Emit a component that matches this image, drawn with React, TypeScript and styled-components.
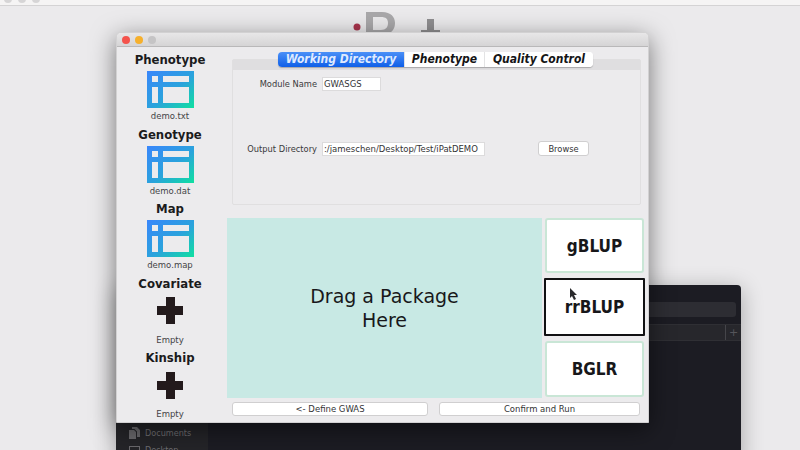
import React from "react";
import styled, { createGlobalStyle } from "styled-components";

const GlobalStyle = createGlobalStyle`
  html, body {
    margin: 0;
    padding: 0;
    width: 800px;
    height: 450px;
    overflow: hidden;
    background: #ebeaec;
    font-family: "DejaVu Sans", "Liberation Sans", sans-serif;
  }
`;

const Desktop = styled("div")`
  position: relative;
  width: 800px;
  height: 450px;
  overflow: hidden;
  background: #ebeaec;
`;

const BackTopBar = styled("div")`
  display: flex;
  gap: 6px;
  height: 5px;
  padding-left: 4px;
  background: #f5f4f4;
  border-bottom: 1px solid #d4d3d4;
  overflow: hidden;
`;

const FadedDot = styled("span")`
  width: 8px;
  height: 8px;
  margin-top: -5px;
  border-radius: 50%;
  background: #d6d5d6;
`;

const Logo = styled("svg")`
  position: absolute;
  left: 345px;
  top: 8px;
`;

const DarkWindow = styled("div")`
  position: absolute;
  left: 116px;
  top: 285px;
  width: 625px;
  height: 180px;
  display: flex;
  background: #1c1c23;
  border-radius: 4px 4px 0 0;
  box-shadow: 0 4px 22px rgba(0, 0, 0, 0.3);
`;

const DarkSidebar = styled("div")`
  width: 92px;
  padding: 142px 0 0 13px;
  box-sizing: border-box;
  display: flex;
  flex-direction: column;
  gap: 5px;
  background: #242428;
`;

const DarkItem = styled("div")`
  display: flex;
  align-items: center;
  gap: 5px;
  height: 12px;
  font-size: 9px;
  font-stretch: condensed;
  color: #6f6e72;
`;

const DarkMain = styled("div")`
  flex: 1;
  display: flex;
  flex-direction: column;
`;

const DarkToolbar = styled("div")`
  height: 22px;
  margin: 17px 5px 0 0;
`;

const DarkSearch = styled("div")`
  height: 15px;
  border-radius: 3px;
  background: #2d2d33;
`;

const DarkTabs = styled("div")`
  height: 15px;
  display: flex;
  justify-content: flex-end;
  border-top: 1px solid #2f2f34;
  border-bottom: 1px solid #2f2f34;
  background: #27272c;
`;

const DarkPlus = styled("div")`
  width: 15px;
  line-height: 15px;
  text-align: center;
  font-size: 11px;
  color: #55555a;
  border-left: 1px solid #45454a;
`;

const MainWindow = styled("div")`
  position: absolute;
  left: 116px;
  top: 32px;
  width: 533px;
  height: 391px;
  display: flex;
  flex-direction: column;
  box-sizing: border-box;
  background: #ecebed;
  border: 1px solid #d2d1d2;
  border-radius: 5px 5px 0 0;
  box-shadow: 0 6px 24px rgba(0, 0, 0, 0.5);
`;

const TitleBar = styled("div")`
  flex: none;
  height: 13px;
  display: flex;
  align-items: center;
  gap: 5px;
  padding-left: 5px;
  background: linear-gradient(#e8e7e8, #d5d4d5);
  border-bottom: 1px solid #b9b8b9;
  border-radius: 4px 4px 0 0;
`;

const Light = styled("span")<{ $color: string }>`
  width: 8px;
  height: 8px;
  border-radius: 50%;
  background: ${(p) => p.$color};
`;

const WindowBody = styled("div")`
  flex: 1;
  display: flex;
  min-height: 0;
`;

const Sidebar = styled("div")`
  flex: none;
  width: 106px;
  display: flex;
  flex-direction: column;
  padding-top: 5px;
  box-sizing: border-box;
`;

const SourceItem = styled("div")`
  flex: none;
  height: 74.5px;
  display: flex;
  flex-direction: column;
  align-items: center;
`;

const SourceTitle = styled("div")`
  height: 15px;
  line-height: 15px;
  font-size: 13px;
  font-weight: 700;
  font-stretch: condensed;
  color: #1b1b1c;
`;

const SourceIcon = styled("div")`
  height: 38px;
  margin-top: 4px;
  display: flex;
  align-items: flex-start;
`;

const PlusSvg = styled("svg")`
  margin-top: 2.5px;
`;

const SourceLabel = styled("div")`
  margin-top: 2px;
  line-height: 11px;
  font-size: 8.5px;
  color: #444446;
`;

const Content = styled("div")`
  position: relative;
  flex: 1;
  min-width: 0;
  display: flex;
  flex-direction: column;
  padding-top: 12px;
`;

const TabBar = styled("div")`
  position: absolute;
  left: 55px;
  top: 5px;
  z-index: 1;
  display: flex;
  height: 15px;
  border-radius: 4px;
  background: #fff;
  box-shadow: 0 1px 1px rgba(0, 0, 0, 0.25);
  overflow: hidden;
`;

const Tab = styled("div")<{ $width: number; $active?: boolean }>`
  width: ${(p) => p.$width}px;
  line-height: 15px;
  text-align: center;
  font-size: 12px;
  font-weight: 700;
  font-style: italic;
  font-stretch: condensed;
  color: ${(p) => (p.$active ? "#dfeaff" : "#151516")};
  background: ${(p) => (p.$active ? "linear-gradient(#4b90f7, #0f5fe8)" : "#fff")};
  border-right: 1px solid #e3e3e4;
  box-sizing: border-box;
  &:last-child {
    border-right: 0;
  }
`;

const Panel = styled("div")`
  flex: none;
  height: 146px;
  margin: 0 7px 0 9px;
  box-sizing: border-box;
  border: 1px solid #e0dfe0;
  border-radius: 2px;
`;

const PanelStrip = styled("div")`
  height: 10px;
  background: #dfdee0;
`;

const FormRow = styled("div")<{ $top: number }>`
  display: flex;
  align-items: center;
  height: 15px;
  margin-top: ${(p) => p.$top}px;
`;

const FieldLabel = styled("div")`
  width: 84px;
  margin-right: 5px;
  text-align: right;
  white-space: nowrap;
  font-size: 8.3px;
  color: #3a3a3c;
`;

const Field = styled("div")<{ $width: number }>`
  width: ${(p) => p.$width}px;
  height: 14px;
  box-sizing: border-box;
  padding-left: 1px;
  line-height: 13px;
  font-size: 8.5px;
  white-space: nowrap;
  overflow: hidden;
  color: #333335;
  background: #fff;
  border: 1px solid #dcdbdc;
`;

const BrowseButton = styled("div")`
  width: 51px;
  height: 15px;
  margin-left: 53px;
  line-height: 14px;
  text-align: center;
  font-size: 8.3px;
  color: #333335;
  background: #fff;
  border: 1px solid #d0cfd0;
  border-radius: 3px;
  box-sizing: border-box;
`;

const Workspace = styled("div")`
  flex: none;
  display: flex;
  height: 180px;
  margin-top: 13px;
  margin-left: 4px;
  gap: 3px;
`;

const DropZone = styled("div")`
  flex: none;
  width: 315px;
  display: flex;
  align-items: center;
  justify-content: center;
  text-align: center;
  font-size: 19px;
  line-height: 24px;
  color: #18181a;
  background: #c8e9e4;
`;

const Packages = styled("div")`
  flex: none;
  width: 99px;
  display: flex;
  flex-direction: column;
  gap: 5px;
`;

const PackageButton = styled("div")<{ $height: number; $selected?: boolean }>`
  height: ${(p) => p.$height}px;
  margin: ${(p) => (p.$selected ? "0 -1px" : "0")};
  display: flex;
  align-items: center;
  justify-content: center;
  box-sizing: border-box;
  background: #fff;
  font-size: 17px;
  font-weight: 700;
  font-stretch: condensed;
  color: #17171a;
  border: ${(p) => (p.$selected ? "2px solid #111113" : "2px solid #c9e6d6")};
  border-radius: ${(p) => (p.$selected ? "1px" : "3px")};
`;

const Footer = styled("div")`
  flex: none;
  display: flex;
  margin: 4px 8px 0 9px;
  gap: 11px;
`;

const FooterButton = styled("div")<{ $width: number }>`
  width: ${(p) => p.$width}px;
  height: 14px;
  line-height: 13px;
  text-align: center;
  font-size: 8.5px;
  color: #333335;
  background: #fff;
  border: 1px solid #d0cfd0;
  border-radius: 3px;
  box-sizing: border-box;
`;

const Cursor = styled("svg")`
  position: absolute;
  left: 569px;
  top: 288px;
`;

const GridIcon = ({ id }: { id: string }) => (
  <svg width="47" height="37" viewBox="0 0 47 37">
    <defs>
      <linearGradient id={id} x1="0" y1="0" x2="1" y2="1">
        <stop offset="0" stopColor="#3a86fb" />
        <stop offset="0.55" stopColor="#2aa3dc" />
        <stop offset="1" stopColor="#0fe0a0" />
      </linearGradient>
    </defs>
    <rect width="47" height="37" fill={`url(#${id})`} />
    <rect x="5" y="5" width="6" height="6" fill="#ecebed" />
    <rect x="16" y="5" width="26" height="6" fill="#ecebed" />
    <rect x="5" y="16" width="6" height="16" fill="#ecebed" />
    <rect x="16" y="16" width="26" height="16" fill="#ecebed" />
  </svg>
);

const PlusIcon = () => (
  <PlusSvg width="26" height="27" viewBox="0 0 26 27">
    <path d="M9 0h9v9h8v9h-8v9H9v-9H0V9h9z" fill="#231a1c" />
  </PlusSvg>
);

const sources = [
  { title: "Phenotype", label: "demo.txt", filled: true },
  { title: "Genotype", label: "demo.dat", filled: true },
  { title: "Map", label: "demo.map", filled: true },
  { title: "Covariate", label: "Empty", filled: false },
  { title: "Kinship", label: "Empty", filled: false },
];

export default function App() {
  return (
    <Desktop>
      <GlobalStyle />
      <BackTopBar>
        <FadedDot />
        <FadedDot />
        <FadedDot />
      </BackTopBar>
      <Logo width="100" height="26" viewBox="0 0 100 26">
        <circle cx="12" cy="19" r="3.500" fill="#a8344c" />
        <path d="M21 4h16c9 0 13 5 13 11s-3 9-7 11h-22z M28 9v13h8c5 0 7-3 7-7s-2-6-7-6z" fill="#a9a8aa" fillRule="evenodd" />
        <rect x="82" y="11" width="7" height="13" fill="#8f8e90" />
        <rect x="76" y="22" width="19" height="2" fill="#8f8e90" />
      </Logo>
      <DarkWindow>
        <DarkSidebar>
          <DarkItem>
            <svg width="11" height="12" viewBox="0 0 11 12">
              <path d="M0 3h5l2 2v7H0z" fill="#69686c" />
              <path d="M3 0h5l3 3v7H8V4.500L5.500 2H3z" fill="#69686c" />
            </svg>
            Documents
          </DarkItem>
          <DarkItem>
            <svg width="11" height="11" viewBox="0 0 11 11">
              <rect x="0.500" y="1.500" width="10" height="8" fill="none" stroke="#69686c" />
            </svg>
            Desktop
          </DarkItem>
        </DarkSidebar>
        <DarkMain>
          <DarkToolbar>
            <DarkSearch />
          </DarkToolbar>
          <DarkTabs>
            <DarkPlus>+</DarkPlus>
          </DarkTabs>
        </DarkMain>
      </DarkWindow>
      <MainWindow>
        <TitleBar>
          <Light $color="#f4534c" />
          <Light $color="#f6b02c" />
          <Light $color="#c5c4c5" />
        </TitleBar>
        <WindowBody>
          <Sidebar>
            {sources.map((s, i) => (
              <SourceItem key={s.title}>
                <SourceTitle>{s.title}</SourceTitle>
                <SourceIcon>{s.filled ? <GridIcon id={`grid-${i}`} /> : <PlusIcon />}</SourceIcon>
                <SourceLabel>{s.label}</SourceLabel>
              </SourceItem>
            ))}
          </Sidebar>
          <Content>
            <TabBar>
              <Tab $width={127} $active>Working Directory</Tab>
              <Tab $width={80}>Phenotype</Tab>
              <Tab $width={108}>Quality Control</Tab>
            </TabBar>
            <Panel>
              <PanelStrip />
              <FormRow $top={6}>
                <FieldLabel>Module Name</FieldLabel>
                <Field $width={59}>GWASGS</Field>
              </FormRow>
              <FormRow $top={50}>
                <FieldLabel>Output Directory</FieldLabel>
                <Field $width={163}>:/jameschen/Desktop/Test/iPatDEMO</Field>
                <BrowseButton>Browse</BrowseButton>
              </FormRow>
            </Panel>
            <Workspace>
              <DropZone>
                Drag a Package
                <br />
                Here
              </DropZone>
              <Packages>
                <PackageButton $height={55}>gBLUP</PackageButton>
                <PackageButton $height={58} $selected>rrBLUP</PackageButton>
                <PackageButton $height={56}>BGLR</PackageButton>
              </Packages>
            </Workspace>
            <Footer>
              <FooterButton $width={197}>{"<- Define GWAS"}</FooterButton>
              <FooterButton $width={202}>Confirm and Run</FooterButton>
            </Footer>
          </Content>
        </WindowBody>
      </MainWindow>
      <Cursor width="9" height="13" viewBox="0 0 9 13">
        <path d="M1 0l7 7H5l2 4-2 1-2-4-2 2z" fill="#2a2a2c" />
      </Cursor>
    </Desktop>
  );
}
